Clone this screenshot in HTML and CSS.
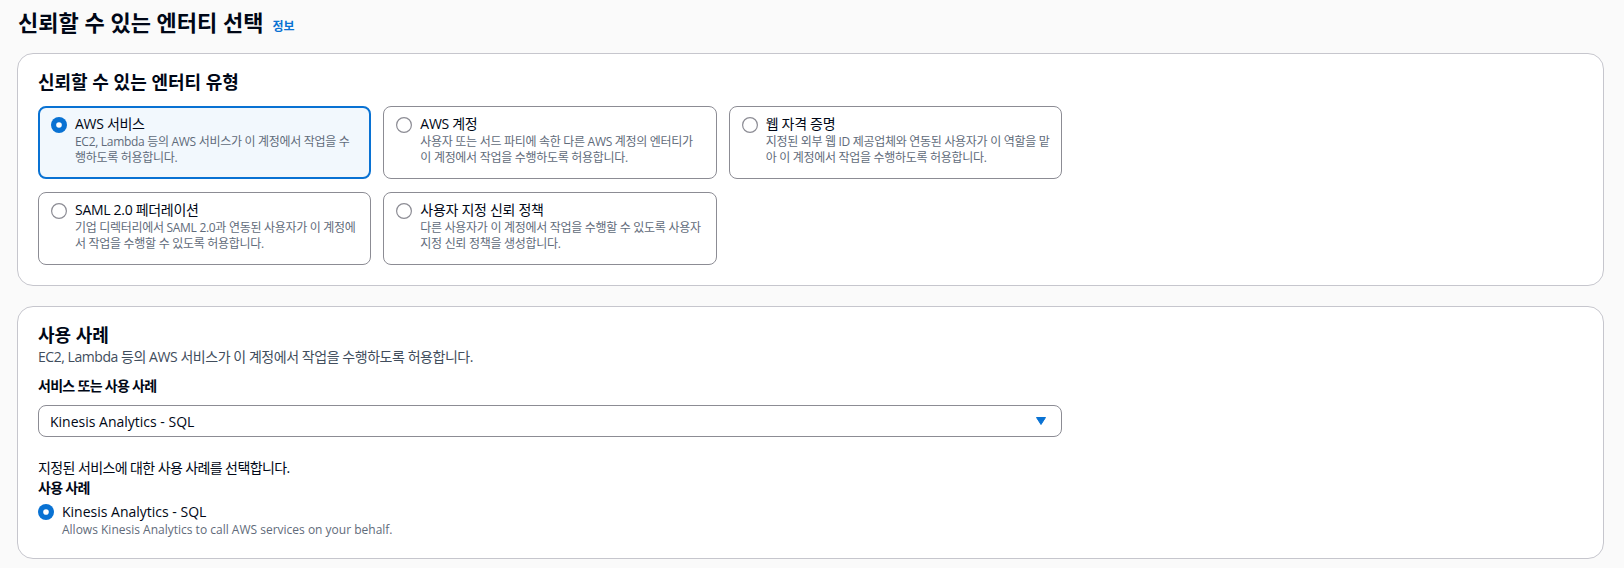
FILE: index.html
```html
<!DOCTYPE html>
<html lang="ko">
<head>
<meta charset="utf-8">
<link rel="stylesheet" href="styles.css">
</head>
<body>
<div class="page">
  <h1 class="page-title"><span class="title-text">신뢰할 수 있는 엔터티 선택</span><a class="info-link">정보</a></h1>

  <section class="panel">
    <h2 class="panel-heading">신뢰할 수 있는 엔터티 유형</h2>
    <div class="tiles">
      <div class="tile tile-selected">
        <svg class="radio" viewBox="0 0 16 16"><circle cx="8" cy="8" r="8" fill="#0972d3"/><circle cx="8" cy="8" r="2.8" fill="#fff"/></svg>
        <div class="tile-body">
          <div class="tile-title">AWS 서비스</div>
          <div class="tile-desc">EC2, Lambda 등의 AWS 서비스가 이 계정에서 작업을 수행하도록 허용합니다.</div>
        </div>
      </div>
      <div class="tile">
        <svg class="radio" viewBox="0 0 16 16"><circle cx="8" cy="8" r="7.4" fill="#fff" stroke="#8c8c94" stroke-width="1.2"/></svg>
        <div class="tile-body">
          <div class="tile-title">AWS 계정</div>
          <div class="tile-desc">사용자 또는 서드 파티에 속한 다른 AWS 계정의 엔터티가 이 계정에서 작업을 수행하도록 허용합니다.</div>
        </div>
      </div>
      <div class="tile">
        <svg class="radio" viewBox="0 0 16 16"><circle cx="8" cy="8" r="7.4" fill="#fff" stroke="#8c8c94" stroke-width="1.2"/></svg>
        <div class="tile-body">
          <div class="tile-title">웹 자격 증명</div>
          <div class="tile-desc">지정된 외부 웹 ID 제공업체와 연동된 사용자가 이 역할을 맡아 이 계정에서 작업을 수행하도록 허용합니다.</div>
        </div>
      </div>
      <div class="tile">
        <svg class="radio" viewBox="0 0 16 16"><circle cx="8" cy="8" r="7.4" fill="#fff" stroke="#8c8c94" stroke-width="1.2"/></svg>
        <div class="tile-body">
          <div class="tile-title">SAML 2.0 페더레이션</div>
          <div class="tile-desc">기업 디렉터리에서 SAML 2.0과 연동된 사용자가 이 계정에서 작업을 수행할 수 있도록 허용합니다.</div>
        </div>
      </div>
      <div class="tile">
        <svg class="radio" viewBox="0 0 16 16"><circle cx="8" cy="8" r="7.4" fill="#fff" stroke="#8c8c94" stroke-width="1.2"/></svg>
        <div class="tile-body">
          <div class="tile-title">사용자 지정 신뢰 정책</div>
          <div class="tile-desc">다른 사용자가 이 계정에서 작업을 수행할 수 있도록 사용자 지정 신뢰 정책을 생성합니다.</div>
        </div>
      </div>
    </div>
  </section>

  <section class="panel panel-use">
    <h2 class="panel-heading">사용 사례</h2>
    <p class="panel-sub">EC2, Lambda 등의 AWS 서비스가 이 계정에서 작업을 수행하도록 허용합니다.</p>
    <div class="field-label">서비스 또는 사용 사례</div>
    <div class="select">
      <span class="select-value">Kinesis Analytics - SQL</span>
      <svg class="caret" viewBox="0 0 10 8"><polygon points="0.5,0.5 9.5,0.5 5,7.5" fill="#0972d3" stroke="#0972d3" stroke-linejoin="round"/></svg>
    </div>
    <p class="help">지정된 서비스에 대한 사용 사례를 선택합니다.</p>
    <div class="field-label field-label-tight">사용 사례</div>
    <div class="radio-option">
      <svg class="radio" viewBox="0 0 16 16"><circle cx="8" cy="8" r="8" fill="#0972d3"/><circle cx="8" cy="8" r="2.8" fill="#fff"/></svg>
      <div class="option-body">
        <div class="option-title">Kinesis Analytics - SQL</div>
        <div class="option-desc">Allows Kinesis Analytics to call AWS services on your behalf.</div>
      </div>
    </div>
  </section>
</div>
</body>
</html>
```

FILE: styles.css
```css
* { box-sizing: border-box; }

html, body {
  margin: 0;
  padding: 0;
  background: #fafafa;
}

body {
  font-family: "Open Sans", "Noto Sans CJK KR", sans-serif;
  font-feature-settings: "palt";
  color: #000716;
}

.page {
  padding: 6px 20px 10px 17px;
}

.page-title {
  margin: 0 0 15px 1px;
  height: 32px;
  font-size: 22px;
  line-height: 32px;
  font-weight: 700;
}

.info-link {
  margin-left: 9px;
  font-size: 12px;
  line-height: 1;
  font-weight: 700;
  color: #0972d3;
}

.panel {
  background: #fff;
  border: 1px solid #c6c6cd;
  border-radius: 16px;
  padding: 16px 20px 20px 20px;
}

.panel + .panel {
  margin-top: 20px;
}

.panel-heading {
  margin: 0 0 12px 0;
  font-size: 18px;
  line-height: 24px;
  font-weight: 700;
}

.tiles {
  width: 1024px;
  display: grid;
  grid-template-columns: repeat(3, 1fr);
  column-gap: 12px;
  row-gap: 13px;
}

.tile {
  display: flex;
  align-items: flex-start;
  gap: 8px;
  border: 1px solid #8c8c94;
  border-radius: 8px;
  padding: 7px 10.6px 11px 12px;
  background: #fff;
  min-height: 73px;
}

.tile-selected {
  border: 2px solid #0972d3;
  background: #f2f8fd;
  padding: 6px 9.6px 10px 11px;
}

.tile-body {
  flex: 1;
  min-width: 0;
}

.radio {
  width: 16px;
  height: 16px;
  flex: none;
  margin-top: 3px;
}

.tile-title {
  font-size: 14px;
  line-height: 20px;
  letter-spacing: -0.3px;
}

.tile-desc {
  font-size: 12px;
  line-height: 16px;
  letter-spacing: -0.3px;
  color: #5f6b7a;
}

.panel-use .panel-heading {
  margin-bottom: 0;
}

.panel-sub {
  margin: 0;
  font-size: 14px;
  line-height: 20px;
  letter-spacing: -0.45px;
  color: #414d5c;
}

.field-label {
  margin-top: 9px;
  font-size: 14px;
  line-height: 20px;
  font-weight: 700;
  letter-spacing: -0.7px;
}

.field-label-tight {
  margin-top: 0;
}

.select {
  margin-top: 9px;
  width: 1024px;
  height: 32px;
  border: 1px solid #8c8c94;
  border-radius: 8px;
  background: #fff;
  display: flex;
  align-items: center;
  justify-content: space-between;
  padding: 0 15px 0 11px;
  font-size: 14px;
}

.caret {
  width: 10px;
  height: 8px;
}

.help {
  margin: 21px 0 0 0;
  font-size: 14px;
  line-height: 20px;
  letter-spacing: -0.6px;
}

.radio-option {
  margin-top: 4px;
  display: flex;
  align-items: flex-start;
  gap: 8px;
}

.radio-option .radio {
  margin-top: 2px;
}

.option-title {
  font-size: 14px;
  line-height: 20px;
}

.option-desc {
  font-size: 12px;
  line-height: 16px;
  color: #5f6b7a;
}
```
